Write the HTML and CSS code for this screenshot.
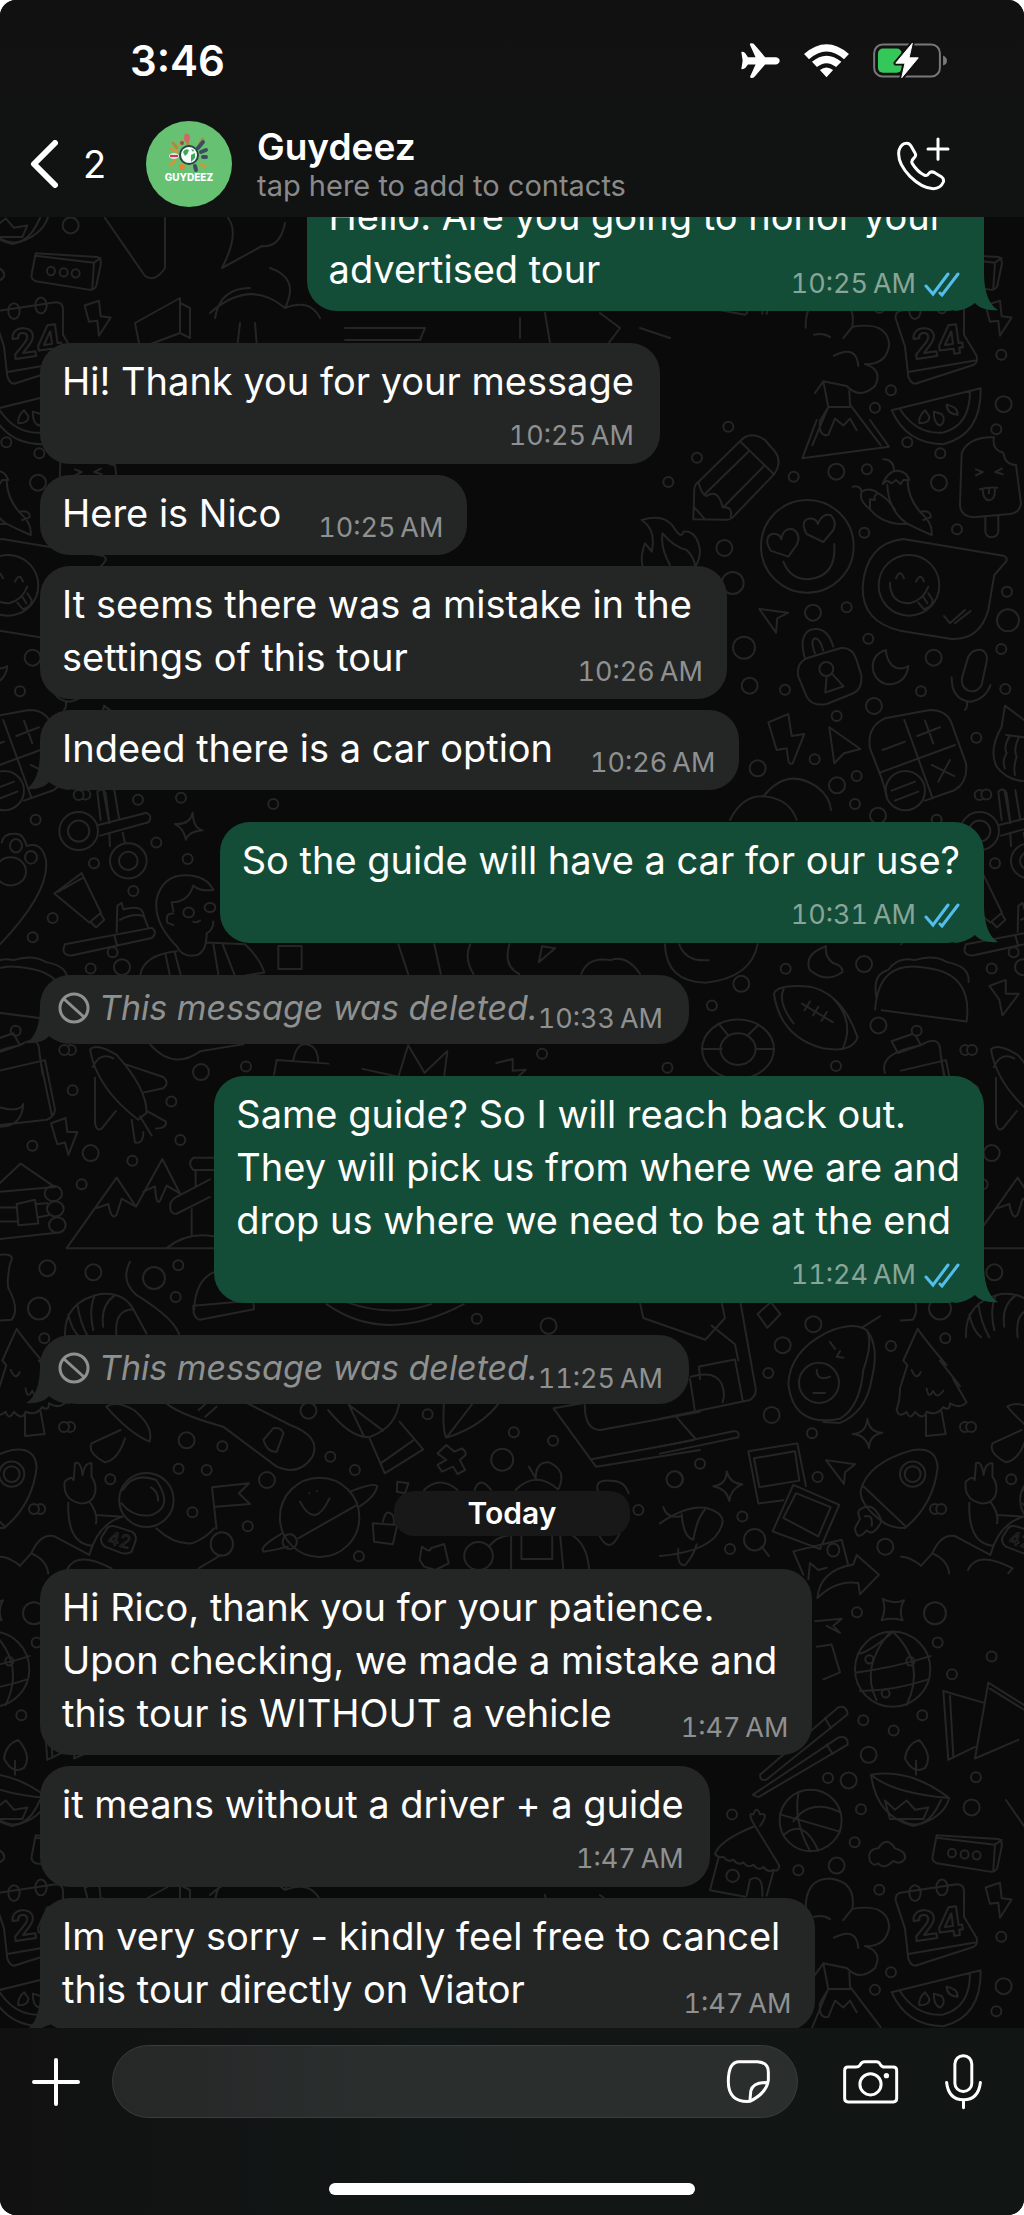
FILE: index.html
```
<!DOCTYPE html>
<html lang="en">
<head>
  <meta charset="UTF-8">
  <meta name="viewport" content="width=device-width, initial-scale=1">
  <title>Guydeez</title>
  <link rel="stylesheet" href="styles.css">
</head>
<body>

<div class="screen">

  <header class="top">
    <div class="status">
      <span class="clock">3:46</span>
      <div class="status-icons">
        <svg class="plane" viewBox="120 68 124 112" aria-hidden="true"><path d="M124 98Q131 97 136 102L144 114H167L150 76Q149 72 154 72Q161 72 164 76L196 114H229Q240 116 240 124.500Q240 133 229 136H196L164 173Q160 178 154 177Q149 176 151 172L167 136H144L136 147Q131 151 124 150L128 125Z" fill="#fff"/></svg>
        <svg class="wifi" viewBox="309 66 142 106" aria-hidden="true"><path d="M312 99Q380 40 448 99L433 115Q380 68 327 115ZM336 123Q380 86 425 123L409 139Q380 115 351 139ZM360 148Q380 132 400 148L380 170Z" fill="#fff"/></svg>
        <svg class="battery" viewBox="513 64 228 112" aria-hidden="true">
          <rect x="518.500" y="71.500" width="199" height="97" rx="26" fill="none" stroke="#78787a" stroke-width="6"/>
          <path d="M727 105Q739 110 739 121T727 135Z" fill="#78787a"/>
          <rect x="530" y="84" width="72" height="73" rx="15" fill="#34c759"/>
          <path d="M634 68L584 128H612L602 172L652 112H624Z" fill="#fff" stroke="#111" stroke-width="14" stroke-linejoin="round"/>
          <path d="M634 68L584 128H612L602 172L652 112H624Z" fill="#fff" stroke="#fff" stroke-width="3" stroke-linejoin="round"/>
        </svg>
      </div>
    </div>

    <div class="nav">
      <button class="back" type="button" aria-label="Back, 2 unread">
        <svg viewBox="0 0 28 48" aria-hidden="true"><path d="M25 3L4 24L25 45" fill="none" stroke="#fff" stroke-width="6" stroke-linecap="round" stroke-linejoin="round"/></svg>
        <span>2</span>
      </button>
      <svg class="avatar" viewBox="0 0 86 86" aria-hidden="true">
        <circle cx="43" cy="43" r="43" fill="#66c172"/>
        <g stroke-width="3" stroke-linecap="round" fill="none">
          <path d="M42 24L40 14M31 27L27 22M54 22L57 18" stroke="#b08a3c"/>
          <path d="M52 27L57 21M55 31L60 29M57 36H60M49 45L50 49" stroke="#3f4c60" stroke-width="4"/>
          <path d="M31 31L25 28M29 40L24 44M55 43L59 46M33 24L36 20" stroke="#c99a3a"/>
        </g>
        <ellipse cx="41" cy="17" rx="3" ry="4" fill="#d8646a"/>
        <ellipse cx="28" cy="35" rx="5" ry="3" fill="#f2dfe2"/>
        <path d="M24 35H32" stroke="#c43d55" stroke-width="2"/>
        <circle cx="36" cy="46" r="3" fill="#e0872f"/>
        <circle cx="36" cy="22" r="2" fill="#705a6c"/>
        <circle cx="43" cy="34" r="10" fill="#2e4240"/>
        <circle cx="43" cy="34" r="8" fill="#f4fff7"/>
        <path d="M37 31Q39 27 43 29Q42 33 39 35ZM45 34L49 32V37L45 41ZM45 28L48 29L47 31Z" fill="#3aa85c"/>
        <text x="43" y="60" text-anchor="middle" class="avatar-name">GUYDEEZ</text>
      </svg>
      <div class="contact">
        <h1 class="contact-name">Guydeez</h1>
        <p class="contact-hint">tap here to add to contacts</p>
      </div>
      <button class="call" type="button" aria-label="Call">
        <svg viewBox="588 348 162 162" aria-hidden="true"><g fill="none" stroke="#fff" stroke-width="9" stroke-linecap="round" stroke-linejoin="round"><path d="M597 388Q604 367 620 367Q628 367 633 375L645 396Q650 404 642 411Q632 420 637 428Q652 452 672 462Q682 466 686 458Q693 449 704 455L724 467Q733 474 730 483Q722 502 700 503Q666 502 630 466Q590 425 597 388Z"/><path d="M714 354V415M684 384H744"/></g></svg>
      </button>
    </div>
  </header>

  <main class="chat">

    <!-- doodle wallpaper, one tile repeated on both axes -->
    <svg class="wallpaper" aria-hidden="true">
      <defs>
        <g id="tile">
          <g transform="translate(640 420) scale(.3333)">
            <path d="M160 298L163 205Q168 188 175 186L300 64Q330 30 375 60L405 95Q428 125 402 163L285 285Q275 298 262 299ZM300 64L402 163M325 95L195 222M370 140L250 262M175 186Q185 225 200 228Q235 205 248 262Q280 260 272 290M163 262L195 298"/>
            <circle cx="502" cy="379" r="139"/>
            <path d="M445 410L392 392Q370 355 395 342Q418 338 424 358Q430 322 460 328Q485 345 470 375ZM550 366L500 342Q480 305 505 296Q528 292 534 312Q545 280 572 285Q592 305 580 330ZM430 425Q450 478 505 478Q590 470 583 372"/>
            <path d="M730 118Q760 118 762 150M728 192Q745 150 775 152Q800 155 808 180L790 180L782 192L768 180L755 190L742 182ZM742 195Q745 270 800 310Q840 330 875 345Q880 310 840 275Q805 235 803 185M638 200Q660 195 665 215M690 268Q655 240 665 215Q690 200 715 220Q700 225 705 240L690 238ZM690 268Q730 315 800 312M715 220Q745 235 765 270M840 275Q875 270 872 292L850 300"/>
            <path d="M965 100Q985 50 1062 52Q1055 90 1090 98Q1095 135 1128 135L1143 250Q1140 278 1110 282L1000 292Q962 290 960 255ZM1036 290V335Q1040 352 1056 352Q1073 350 1075 335V288M1008 148L1028 156L1008 166M1086 146L1066 156L1088 163M1020 208Q1045 200 1072 203M1028 208Q1030 240 1047 241Q1066 240 1065 205M1047 206V220"/>
            <path d="M790 357L1090 407Q1105 412 1098 425L1063 465L1045 570Q1020 660 935 657L780 632Q665 605 668 500Q678 370 790 357ZM750 488Q750 550 810 550Q850 540 865 500M835 548L852 568Q880 560 878 540L865 520M850 530L862 550M768 475Q780 445 792 475M828 485Q842 455 852 485M912 588L930 610L975 570M945 610L992 573"/>
            <circle cx="807" cy="496" r="91"/>
            <path d="M358 567L445 578L412 595L408 638ZM568 922L661 987L612 1000L583 1030ZM385 907L445 882L455 948L493 942L458 1030Q448 1035 445 1022L440 985L410 990Z"/>
            <path d="M500 715L600 685Q635 680 648 715L664 765Q668 810 635 822L560 852Q515 860 500 830L475 770Q468 730 500 715ZM495 715Q475 650 510 630Q560 615 580 680M525 700Q510 660 525 655Q540 655 550 692M560 767L556 818L611 799L575 760"/>
            <circle cx="559" cy="747" r="21"/>
            <path d="M738 690Q690 705 700 755Q715 795 755 793Q800 785 805 738Q780 755 755 735Q738 715 738 690ZM985 710Q1000 685 1025 690Q1045 700 1040 725L1025 795Q1010 820 985 812Q960 800 967 770ZM935 772Q935 840 990 845Q1035 840 1052 795M980 845Q985 860 975 870"/>
            <path d="M740 1125L725 1075L690 985Q680 920 735 895L870 870Q920 870 935 910L978 1030Q985 1085 945 1110L855 1142M793 900L878 1135M720 1058L945 975M728 990L795 965M832 948L900 922M855 902L880 970M875 1035L942 1068M930 1020L895 1085M755 1112L825 1085M765 1142L835 1115"/>
            <circle cx="796" cy="1112" r="59"/>
            <path d="M530 0L487 115L747 80L690 0M370 1130Q440 1040 530 1100Q570 1130 573 1170M270 1200Q310 1120 380 1130Q450 1140 470 1200M5 300Q70 280 100 320Q125 360 130 335Q170 330 180 390Q180 420 165 440M5 300Q50 330 35 395L15 370Q0 410 8 440M68 340Q60 380 90 435M68 340Q100 380 140 390Q165 415 165 440"/>
            <path d="M1085 920Q1045 990 1070 1040Q1100 1080 1150 1083M1152 900L1095 857L1085 920M1098 945L1152 952M1108 950Q1090 980 1100 1000Q1085 1020 1095 1045M1135 955Q1120 990 1130 1010Q1120 1040 1125 1065M1110 1200L1100 1120Q1090 1100 1075 1115L1085 1200"/>
            <g class="ring-s"><path id="a1" d="M265 20h0M171 113h0M85 186h0M461 170h0M681 148h0M802 67h0M901 100h0M673 338h0M951 328h0M620 562h0M1101 515h0M685 656h0M1084 687h0M435 809h0M843 814h0M1096 807h0M590 888h0M524 1018h0M650 1068h0M645 1152h0M1009 953h0M1019 1125h0"/><use href="#a1" class="hole"/></g>
            <g class="ring-m"><path id="a2" d="M589 155h0M897 188h0M253 384h0M519 578h0M881 713h0M329 797h0M702 858h0M353 1045h0M591 1096h0M714 1187h0"/><use href="#a2" class="hole"/></g>
            <g class="ring-l"><path id="a3" d="M278 489h0M312 683h0M1104 601h0"/><use href="#a3" class="hole"/></g>
          </g>

          <g transform="translate(0 790) scale(.3333 .3508)">
            <ellipse cx="236" cy="117" rx="58" ry="54"/><ellipse cx="236" cy="117" rx="32" ry="30"/>
            <ellipse cx="385" cy="202" rx="55" ry="50"/><ellipse cx="385" cy="202" rx="28" ry="26"/>
            <path d="M295 100L440 65Q460 75 445 92L300 130M310 0L328 95M343 0L357 80M328 125L330 160M368 122L375 152M525 97Q570 100 578 65Q580 110 608 115Q565 118 558 142Q552 110 525 97Z"/>
            <path d="M0 440Q150 290 138 200Q125 145 80 160Q70 120 40 125Q10 125 5 150"/>
            <ellipse cx="48" cy="159" rx="18" ry="19"/><ellipse cx="93" cy="192" rx="18" ry="18"/><ellipse cx="32" cy="232" rx="46" ry="40"/>
            <path d="M163 295L245 237L303 350L268 378ZM175 290L250 250M303 355l10 15l-25 22l-15-15M195 440L455 393Q475 405 455 422L215 472Q180 470 195 440ZM343 415L352 445M350 405L352 330L365 322L370 340Q430 325 432 360L445 393M360 370Q400 350 432 360"/>
            <path d="M530 445Q460 380 470 310Q490 240 560 243Q620 245 640 285Q600 290 580 272Q565 320 515 320L520 345M530 445Q545 475 580 472Q620 470 620 408Q640 400 640 375M520 352Q495 350 502 378L520 385M420 530Q430 470 530 460M620 435L735 440Q780 480 793 520L730 530M497 470L510 530M640 438L655 525M525 465L543 530M668 440L705 530M580 375Q590 380 600 372"/>
            <ellipse cx="566" cy="349" rx="16" ry="14"/><ellipse cx="630" cy="335" rx="16" ry="13"/>
            <path d="M835 445h70v65h-70zM0 800L135 770L165 910Q165 930 140 940L0 955M122 775L155 925M0 905Q60 920 70 895Q65 960 0 960"/>
            <path d="M270 740Q290 720 350 755Q440 850 440 920L415 940Q290 850 270 740ZM370 780L490 818Q510 835 490 850L432 862M285 820L285 950Q290 975 305 965L348 915M278 790Q300 745 340 765M395 940L405 1005Q430 1010 430 975M440 915L498 945Q500 965 468 965M420 930L455 985M153 950L197 935L202 975L232 975L205 1040L195 1005L172 1010Z"/>
            <path d="M540 1150L487 1052L408 1188L350 1105L200 1306H640M290 1192L325 1180Q335 1230 350 1210L365 1165L408 1188M430 1145L465 1130Q470 1200 485 1160L500 1128L540 1150M630 1110L530 1160Q505 1170 512 1200Q520 1210 530 1208L630 1160M575 1195V1270M500 1306Q560 1260 640 1272M640 1048H580Q560 1065 580 1083H640M587 1085V1130"/>
            <path d="M0 1145L165 1132L62 1065L0 1120M0 1280L170 1262M50 1180l55-12l10 68l-60 5zM0 1190H50M0 1230H55M110 1180L142 1178M115 1218L145 1212"/>
            <ellipse cx="160" cy="1150" rx="26" ry="22"/><ellipse cx="166" cy="1194" rx="25" ry="22"/><ellipse cx="172" cy="1240" rx="25" ry="22"/>
            <path d="M195 1560Q190 1460 300 1437Q370 1430 400 1480L440 1550M205 1495Q215 1540 240 1560M232 1465Q240 1520 265 1560M285 1440Q265 1480 280 1540M345 1440Q300 1470 310 1530M400 1480Q340 1480 350 1560M390 1345Q360 1400 410 1440Q530 1510 540 1560M583 1480Q585 1400 640 1375M580 1470L760 1455L762 1480L600 1510Q578 1505 580 1470ZM0 1325Q50 1320 30 1350Q20 1400 25 1420Q60 1480 35 1510L0 1512"/>
            <path d="M450 725Q520 800 600 745L730 725M822 812L830 770L985 780M880 770Q890 720 920 725Q955 730 955 780"/>
            <g class="ring-s"><path id="b1" d="M256 13h0M107 85h0M414 28h0M543 22h0M469 150h0M563 197h0M282 209h0M400 288h0M158 365h0M98 420h0M272 509h0M47 686h0M213 741h0M218 856h0M738 788h0M514 888h0M97 1014h0M541 998h0M397 1057h0M245 1124h0M535 1355h0M527 1445h0M820 40h0"/><use href="#b1" class="hole"/></g>
            <g class="ring-m"><path id="b2" d="M366 505h0M603 804h0M272 1035h0M142 1363h0M280 1375h0"/><use href="#b2" class="hole"/></g>
            <g class="ring-l"><path id="b3" d="M462 1391h0M117 1478h0"/><use href="#b3" class="hole"/></g>
          </g>

          <g transform="translate(0 800) scale(.6531 .3954)">
            <path d="M1265 370Q1230 390 1240 430Q1265 465 1290 435Q1290 418 1275 412Q1262 395 1265 370ZM1185 490Q1190 465 1240 472Q1290 490 1313 600Q1305 640 1260 628Q1195 600 1185 490ZM1228 515L1275 562M1232 532l8-22M1245 545l8-22M1258 558l8-22M1200 478Q1190 510 1215 565M1275 500Q1310 560 1290 630"/>
            <path d="M1340 530Q1345 400 1420 425Q1490 440 1480 560L1350 532M1342 500Q1335 440 1360 430Q1375 395 1400 405Q1430 390 1450 410Q1485 420 1483 460M1515 470L1540 455V490L1560 490L1535 545L1530 505ZM1018 365Q1020 460 1080 462Q1150 450 1160 365M1040 365Q1050 410 1085 405"/>
            <ellipse cx="1130" cy="630" rx="55" ry="75"/><ellipse cx="1130" cy="630" rx="27" ry="40"/>
            <path d="M1115 595L1100 565M1145 595L1162 568M1157 630H1185M1105 630H1075M1365 610l35-20l10 30l-35 20zM1355 690Q1345 640 1410 620Q1440 590 1440 640L1445 695M500 1275Q590 1380 710 1275M530 1270Q600 1310 660 1275M980 1272L985 1310L1080 1365L1110 1310L1105 1272M1160 1300l20-30l15 30l-20 35zM555 680L610 700L625 620L650 690L685 635L680 700M760 665l25-10v30l20-3l-20 30"/>
            <path d="M610 365L625 440M665 365L675 440M720 365Q710 400 725 440M780 365Q770 420 795 440M830 370L850 375L825 410ZM890 440Q900 395 935 405Q960 390 980 440"/>
            <g class="ring-s"><path id="e1" d="M1203 427h0M1090 520h0M1478 632h0M1280 673h0M1022 677h0M830 642h0M1552 385h0M730 1312h0"/><use href="#e1" class="hole"/></g>
            <g class="ring-m"><path id="e2" d="M1135 465h0M1323 415h0M1345 570h0M840 1330h0"/><use href="#e2" class="hole"/></g>
          </g>

          <g transform="translate(660 1300) scale(.3333 .4655)">
            <path d="M92 165Q190 145 192 205L188 220M90 170L105 240M120 170L117 143L225 128L248 215M0 255L270 215Q290 205 287 190L240 0M0 315L220 282Q240 280 235 295L0 330M50 252L105 297M155 55L225 95L235 130"/>
            <path d="M385 180Q390 110 500 70Q580 45 620 65Q640 90 610 150Q600 230 540 255Q400 275 385 180ZM620 65Q660 100 635 170Q620 240 540 264L490 262M605 60L660 35M510 90L525 105M540 110L530 122L550 124M470 150Q470 175 510 165M460 200H495"/>
            <ellipse cx="477" cy="178" rx="60" ry="43"/>
            <path d="M773 62L730 130L742 140L720 190Q720 215 710 235Q715 255 740 240Q750 260 765 240Q790 260 800 240Q830 250 850 230Q870 240 870 222Q900 235 920 220L880 170L900 185L840 130L860 140Q800 90 773 62ZM798 245V292L857 288L845 240M755 150Q770 175 782 155M800 190Q805 215 820 195Q830 215 850 195"/>
            <path d="M438 400L412 308L265 325L295 437L370 430M282 340L405 325L418 388L298 402ZM400 397L538 440L480 535L338 497ZM408 415L512 445L475 508L370 468ZM430 590L400 540L545 515L565 570M445 600L450 565L475 580L500 575"/>
            <ellipse cx="520" cy="537" rx="18" ry="14"/>
            <path d="M472 640Q480 580 580 568L590 548L657 590L600 632L595 608Q530 600 472 640ZM498 344L585 353L555 370L552 395ZM578 288Q620 285 622 255Q628 285 667 285Q628 290 627 318Q618 290 578 288ZM160 400Q200 397 200 368Q210 395 247 396Q212 405 208 432Q200 405 160 400ZM668 642Q700 655 732 645Q715 665 728 688Q695 682 665 688Q680 665 668 642Z"/>
            <path d="M602 410Q620 350 760 322Q830 315 833 360Q820 440 735 490Q690 490 665 475Q600 440 602 410ZM610 400L735 485M600 450Q640 430 665 475Q640 510 620 495Q590 520 585 490L600 470Q590 455 600 450M615 465Q640 460 635 485"/>
            <ellipse cx="758" cy="374" rx="38" ry="27"/><ellipse cx="758" cy="374" rx="24" ry="17"/>
            <path d="M0 480Q80 440 140 447Q200 460 185 485Q160 540 0 550M10 445Q20 470 60 465M65 460Q70 510 100 515Q110 470 135 450M55 535Q50 570 75 570Q100 550 110 525M305 530L327 550"/>
            <ellipse cx="284" cy="515" rx="32" ry="23"/>
            <ellipse cx="698" cy="793" rx="113" ry="81"/>
            <path d="M690 713Q600 790 650 860M698 712Q800 780 740 870M600 760Q640 750 700 712M590 800Q700 790 812 765M600 840Q700 840 805 815"/>
            <ellipse cx="628" cy="772" rx="12" ry="9"/><ellipse cx="751" cy="776" rx="12" ry="9"/><ellipse cx="677" cy="845" rx="12" ry="9"/>
            <path d="M300 1020L535 875Q560 870 563 890L320 1030Q300 1035 300 1020ZM278 1063L535 940Q565 935 563 955L295 1068ZM495 898l18 22M500 955l18 20M465 690L545 685L520 700L540 715L500 700M470 745L515 740L540 800L490 815"/>
            <path d="M970 865L850 840L865 988L945 960M870 850L880 980M1092 870L985 822L945 985L1075 945M990 835L1092 880"/>
            <path d="M633 1020Q750 1005 868 1070Q850 1115 760 1130Q650 1110 633 1020ZM633 1020Q700 1060 868 1070M735 985Q740 955 778 945Q820 980 795 1005Q760 1020 735 985ZM768 990V1020M675 1075L690 1115H790L805 1090L765 1095L740 1075L705 1095Z"/>
            <ellipse cx="452" cy="1118" rx="93" ry="66"/>
            <path d="M360 1105L540 1142M415 1060Q400 1120 450 1183M400 1120Q450 1070 540 1100M370 1150Q430 1110 475 1183M630 1205Q620 1180 655 1178Q680 1150 705 1178Q740 1185 735 1200Q720 1215 700 1205Q670 1225 655 1210Q640 1218 630 1205Z"/>
            <path d="M830 1150L1015 1158Q1028 1160 1025 1175L1012 1220Q1005 1230 990 1228L830 1210Q815 1205 818 1195ZM830 1155L1005 1170L1000 1225M1005 1170L1025 1160"/>
            <ellipse cx="876" cy="1188" rx="12" ry="9"/><ellipse cx="914" cy="1191" rx="12" ry="9"/><ellipse cx="950" cy="1193" rx="12" ry="9"/>
            <path d="M165 1190Q180 1160 285 1130L358 1215Q355 1230 340 1224Q325 1232 310 1218Q295 1228 280 1213Q265 1222 250 1208Q235 1216 220 1202Q205 1210 190 1196Q175 1200 165 1190ZM175 1200L150 1268L255 1282M340 1228L320 1280M260 1280L270 1245Q310 1230 307 1280M285 1130Q260 1100 280 1105Q290 1085 300 1105Q330 1100 300 1130"/>
            <ellipse cx="218" cy="1237" rx="19" ry="13"/>
            <path d="M437 1310Q435 1243 510 1243Q590 1250 577 1308Q680 1295 688 1345Q680 1390 615 1388Q670 1400 645 1435Q600 1465 560 1435L490 1425L465 1450M577 1308L550 1332M522 1370Q590 1345 595 1392M462 1325Q490 1320 510 1330M490 1425L505 1480L457 1562M568 1445L570 1475L662 1562M505 1480H570M505 1480L480 1510Q475 1545 505 1540L525 1505L550 1520L570 1505L590 1530"/>
            <path d="M707 1290Q705 1275 725 1273L890 1255Q912 1255 912 1270V1325L950 1370Q955 1385 940 1390L775 1428Q755 1435 745 1415L735 1350ZM745 1405L945 1380M977 1262L1020 1252L1025 1285L1055 1288L1020 1327L1015 1295L990 1297Z"/>
            <ellipse cx="765" cy="1274" rx="17" ry="17"/><ellipse cx="846" cy="1262" rx="17" ry="17"/>
            <path d="M695 1487L962 1440Q965 1540 850 1560Q740 1560 695 1487ZM720 1485Q770 1540 850 1535Q930 1520 930 1447M795 1487Q775 1500 778 1515Q810 1515 808 1500ZM822 1490Q820 1515 840 1520Q860 1510 845 1495ZM860 1475Q860 1495 893 1497Q895 1480 860 1475Z"/>
            <g class="ring-s"><path id="c1" d="M325 157h0M693 99h0M856 82h0M456 286h0M915 273h0M120 352h0M473 380h0M247 465h0M825 449h0M210 535h0M591 671h0M833 736h0M995 766h0M876 804h0M787 892h0M610 903h0M701 925h0M948 1025h0M504 1027h0M603 1094h0M216 1105h0M584 1165h0M415 1225h0M658 1267h0M1024 1368h0M693 1444h0M645 1482h0M1009 1528h0"/><use href="#c1" class="hole"/></g>
            <g class="ring-m"><path id="c2" d="M460 52h0M368 97h0M335 247h0M45 385h0M676 530h0M626 977h0M566 1032h0M935 1090h0M530 1215h0M1031 1474h0"/><use href="#c2" class="hole"/></g>
            <g class="ring-l"><path id="c3" d="M825 673h0"/><use href="#c3" class="hole"/></g>
          </g>
          <text x="912" y="1938" class="doodle-24" transform="rotate(-8 937 1924)">24</text>

          <g transform="translate(0 1400) scale(.4464 .3333)">
            <path d="M238 20Q260 0 300 30Q345 80 335 125Q290 100 238 20ZM270 90L205 130Q195 160 235 187Q265 180 280 115M365 0Q390 40 500 80L620 200Q670 230 700 170Q720 110 650 75L540 0M590 120L612 85Q630 80 635 100L620 155Q600 160 590 120M445 30L470 0M485 20L460 50Z"/>
            <path d="M735 30Q790 120 830 110Q890 80 895 0M780 10L815 108M782 15L858 92M828 115L862 220L948 148L895 65M855 188L925 122M995 0Q990 90 1000 113Q1080 80 1120 5M1000 113L1065 0M1000 135L1018 155L1035 145Q1045 155 1043 165L1030 180L1042 210L1025 222L1015 200L990 215L980 195L1000 180L980 160Z"/>
            <path d="M1305 10L1240 25L1335 200L1568 150M1325 178L1555 120M1310 15Q1310 90 1345 90L1568 35"/>
            <path d="M180 310Q140 300 145 245Q160 225 165 240L168 190Q180 180 185 225Q190 185 205 190L205 230Q220 260 210 290Q200 312 180 310ZM153 308Q150 430 205 437M200 305Q220 340 215 370M215 345L275 350M275 270Q300 215 350 240Q390 320 340 345Q300 355 272 310M338 262Q355 275 354 302M240 385Q245 375 260 380L295 395Q308 405 303 425L295 455Q285 465 270 458L235 440Q222 425 228 410ZM45 497L70 460Q90 400 120 408L200 465Q220 370 275 350M350 385Q390 435 430 430Q460 415 480 385M485 385L475 262L558 250L535 280L560 312L482 320M495 465L445 505"/>
            <ellipse cx="328" cy="300" rx="61" ry="81"/><ellipse cx="497" cy="432" rx="25" ry="35"/>
            <path d="M70 460Q105 480 108 520M150 510Q170 450 250 505L240 520M0 470Q20 470 45 497"/>
            <ellipse cx="716" cy="352" rx="89" ry="119"/>
            <path d="M785 275Q840 245 845 260Q840 290 805 320M632 400Q580 440 590 455Q620 450 645 440M800 315L668 415M672 305Q705 390 738 295M693 280h0M710 274h0"/>
            <ellipse cx="649" cy="425" rx="16" ry="22"/>
            <path d="M835 370L838 425L880 433L890 375ZM858 365Q862 335 872 338Q885 345 882 370M945 440Q965 460 965 445L995 432L1005 490L975 510L950 500L940 480ZM890 245l25 5l-8 30l-18-5z"/>
            <ellipse cx="1072" cy="468" rx="32" ry="42"/>
            <path d="M1095 440Q1115 405 1150 405H1280Q1315 430 1320 510M1145 410V510M1168 405V477H1237V405M1255 408L1262 510M1185 200L1200 235Q1200 185 1230 187Q1270 210 1252 265M1155 270Q1200 210 1250 268M950 270Q985 225 1025 270M1063 270Q1075 225 1100 270M1340 275Q1330 240 1365 242Q1400 240 1408 280M1340 400Q1365 470 1388 400"/>
            <g class="ring-s"><path id="d1" d="M157 81h0M498 139h0M740 170h0M795 210h0M463 210h0M400 206h0M247 238h0M90 327h0M431 337h0M555 379h0M958 43h0M1151 97h0M1239 122h0M804 469h0M1430 330h0"/><use href="#d1" class="hole"/></g>
            <g class="ring-m"><path id="d2" d="M418 121h0M598 240h0M691 32h0M1511 238h0"/><use href="#d2" class="hole"/></g>
            <g class="ring-l"><path id="d3" d="M1125 179h0"/><use href="#d3" class="hole"/></g>
          </g>
          <text x="108" y="1546" class="doodle-42" transform="rotate(14 118 1540)">42</text>

          <!-- palm, camera and notes that end up just above the first reply -->
          <path d="M210 1895Q250 1860 285 1890Q300 1860 270 1850M285 1890Q310 1880 320 1900M215 1900Q220 1870 250 1870M240 1905L230 1990M255 1905L262 1990M135 1905L180 1880V1915L140 1930ZM180 1885l10 5v30l-10-5M520 1900V1920M545 1895L550 1925M600 1895l20 15l-15 20M640 1910l30 10M345 1910h80l-5 12h-75M228 1800Q240 1815 222 1850L262 1828Q280 1830 285 1805M105 1800L145 1858Q155 1865 165 1850V1800M0 1820Q25 1835 40 1800"/>
        </g>
      </defs>
      <use href="#tile" y="-217"/>
      <use href="#tile" x="901" y="-217"/>
      <use href="#tile" x="-901" y="-217"/>
      <use href="#tile" y="-1799"/>
      <use href="#tile" x="-901" y="-1799"/>
    </svg>

    <div class="messages">
      <div class="bubble sent overlap tail">
        <p>Hello. Are you going to honor your<br>advertised tour</p>
        <span class="meta"><time>10:25&#8239;AM</time><svg class="ticks" viewBox="0 0 36 26" aria-hidden="true"><path d="M2 15L9 23L24 3M16 22L18 24L34 3"/></svg></span>
      </div>

      <div class="bubble received new-group stacked">
        <p>Hi! Thank you for your message</p>
        <span class="meta"><time>10:25&#8239;AM</time></span>
      </div>
      <div class="bubble received inline">
        <p>Here is Nico</p>
        <span class="meta"><time>10:25&#8239;AM</time></span>
      </div>
      <div class="bubble received overlap">
        <p>It seems there was a mistake in the<br>settings of this tour</p>
        <span class="meta"><time>10:26&#8239;AM</time></span>
      </div>
      <div class="bubble received inline tail">
        <p>Indeed there is a car option</p>
        <span class="meta"><time>10:26&#8239;AM</time></span>
      </div>

      <div class="bubble sent new-group stacked tail">
        <p>So the guide will have a car for our use?</p>
        <span class="meta"><time>10:31&#8239;AM</time><svg class="ticks" viewBox="0 0 36 26" aria-hidden="true"><path d="M2 15L9 23L24 3M16 22L18 24L34 3"/></svg></span>
      </div>

      <div class="bubble received new-group deleted tail">
        <svg class="banned" viewBox="0 0 32 32" aria-hidden="true"><circle cx="16" cy="16" r="14"/><path d="M6 7L26 25"/></svg>
        <p>This message was deleted.</p>
        <span class="meta"><time>10:33&#8239;AM</time></span>
      </div>

      <div class="bubble sent new-group stacked tail">
        <p>Same guide? So I will reach back out.<br>They will pick us from where we are and<br>drop us where we need to be at the end</p>
        <span class="meta"><time>11:24&#8239;AM</time><svg class="ticks" viewBox="0 0 36 26" aria-hidden="true"><path d="M2 15L9 23L24 3M16 22L18 24L34 3"/></svg></span>
      </div>

      <div class="bubble received new-group deleted tail">
        <svg class="banned" viewBox="0 0 32 32" aria-hidden="true"><circle cx="16" cy="16" r="14"/><path d="M6 7L26 25"/></svg>
        <p>This message was deleted.</p>
        <span class="meta"><time>11:25&#8239;AM</time></span>
      </div>

      <div class="day">Today</div>

      <div class="bubble received overlap">
        <p>Hi Rico, thank you for your patience.<br>Upon checking, we made a mistake and<br>this tour is WITHOUT a vehicle</p>
        <span class="meta"><time>1:47&#8239;AM</time></span>
      </div>
      <div class="bubble received stacked">
        <p>it means without a driver + a guide</p>
        <span class="meta"><time>1:47&#8239;AM</time></span>
      </div>
      <div class="bubble received overlap tail">
        <p>Im very sorry - kindly feel free to cancel<br>this tour directly on Viator</p>
        <span class="meta"><time>1:47&#8239;AM</time></span>
      </div>
    </div>
  </main>

  <footer class="composer">
    <form class="composer-row">
      <button class="plus" type="button" aria-label="Attach">
        <svg viewBox="0 0 48 48" aria-hidden="true"><path d="M24 2V46M2 24H46" stroke="#fff" stroke-width="4" stroke-linecap="round"/></svg>
      </button>
      <div class="field">
        <input type="text" aria-label="Message">
        <button class="sticker" type="button" aria-label="Stickers">
          <svg viewBox="140 86 136 136" aria-hidden="true"><path d="M147 154Q147 94 180 94H235Q268 96 268 125V150Q262 190 212 214Q147 218 147 154ZM268 157Q222 155 215 182L212 214" fill="none" stroke="#fff" stroke-width="9" stroke-linejoin="round"/></svg>
        </button>
      </div>
      <button class="camera" type="button" aria-label="Camera">
        <svg viewBox="488 84 172 138" aria-hidden="true"><g fill="none" stroke="#fff" stroke-width="9" stroke-linejoin="round"><path d="M496 118Q496 108 506 108H530Q538 108 543 101Q548 92 556 92H592Q600 92 604 101Q608 108 617 108H642Q653 108 653 118V203Q653 213 643 213H506Q496 213 496 203Z"/><circle cx="574" cy="160" r="32"/></g><circle cx="622" cy="134" r="8" fill="#fff"/></svg>
      </button>
      <button class="mic" type="button" aria-label="Voice message">
        <svg viewBox="792 62 122 172" aria-hidden="true"><g fill="none" stroke="#fff" stroke-width="9" stroke-linecap="round"><rect x="827" y="70" width="51" height="108" rx="25"/><path d="M802 151Q808 203 853 203T904 151M853 203V227"/></g></svg>
      </button>
    </form>
    <div class="home-bar"></div>
  </footer>

</div>

</body>
</html>
```
FILE: styles.css
```
* {
  box-sizing: border-box;
}
body {
  margin: 0;
  background: #fff;
  font-family: Inter, "Liberation Sans", sans-serif;
  color: #fff;
}
h1, p {
  margin: 0;
  font-weight: 400;
}
button {
  padding: 0;
  border: none;
  background: none;
  color: inherit;
  font: inherit;
  cursor: pointer;
}
svg {
  display: block;
}
.screen {
  display: flex;
  flex-direction: column;
  height: 100vh;
  border-radius: 16px;
  overflow: hidden;
  background: #0a0a0a;
}

/* header */
.top {
  background: linear-gradient(#111, #111313);
  padding-bottom: 10px;
}
.status {
  display: flex;
  justify-content: space-between;
  align-items: center;
  height: 121px;
  padding: 0 76px 0 130px;
}
.clock {
  font-size: 42px;
  font-weight: 600;
}
.status-icons {
  display: flex;
  align-items: center;
  gap: 22px;
}
.plane {
  width: 41px;
  height: 37px;
}
.wifi {
  width: 47px;
  height: 35px;
}
.battery {
  width: 76px;
  height: 37px;
}
.nav {
  display: flex;
  align-items: center;
  height: 86px;
  padding: 0 74px 0 30px;
}
.back {
  display: flex;
  align-items: center;
  gap: 25px;
  width: 116px;
  font-size: 38px;
}
.back svg {
  width: 28px;
  height: 48px;
}
.avatar {
  width: 86px;
  height: 86px;
}
.avatar-name {
  font-size: 10px;
  font-weight: 800;
  fill: #fff;
}
.contact {
  flex: 1;
  margin-left: 25px;
}
.contact-name {
  font-size: 37px;
  font-weight: 600;
  line-height: 44px;
}
.contact-hint {
  font-size: 29px;
  line-height: 34px;
  color: #8a8a8a;
}
.call svg {
  width: 54px;
  height: 54px;
}

/* conversation */
.chat {
  position: relative;
  flex: 1;
  min-height: 0;
  display: flex;
  flex-direction: column;
  justify-content: flex-end;
  overflow: hidden;
}
.wallpaper {
  position: absolute;
  inset: 0;
  width: 100%;
  height: 100%;
  fill: none;
  stroke: #252525;
  stroke-width: 2;
  stroke-linecap: round;
  stroke-linejoin: round;
}
.wallpaper * {
  vector-effect: non-scaling-stroke;
}
.ring-s { stroke-width: 12; }
.ring-m { stroke-width: 18; }
.ring-l { stroke-width: 24; }
.hole { stroke: #0a0a0a; }
.ring-s .hole { stroke-width: 8; }
.ring-m .hole { stroke-width: 14; }
.ring-l .hole { stroke-width: 20; }
.doodle-24 {
  font-size: 40px;
  font-weight: 700;
}
.doodle-42 {
  font-size: 18px;
  stroke-width: 1;
}
.messages {
  position: relative;
  display: flex;
  flex-direction: column;
  align-items: flex-start;
  gap: 11px;
  padding: 0 40px;
  margin-bottom: -3px;
}
.bubble {
  --bg: #242626;
  position: relative;
  isolation: isolate;
  display: grid;
  padding: 12px 24px 15px 22px;
  border-radius: 30px;
  background: var(--bg);
  font-size: 38px;
  line-height: 53px;
  white-space: nowrap;
}
.received.stacked {
  padding-right: 26px;
}
.sent {
  --bg: #144d37;
  align-self: flex-end;
}
.new-group {
  margin-top: 21px;
}
.meta {
  display: flex;
  align-items: center;
  justify-content: flex-end;
  gap: 8px;
  font-size: 27px;
  font-variant-numeric: tabular-nums;
  line-height: 40px;
  color: #8f9191;
}
.sent .meta {
  color: #88a598;
}
.ticks {
  width: 36px;
  height: 26px;
  fill: none;
  stroke: #53bdeb;
  stroke-width: 3;
  stroke-linecap: round;
}
/* time on the last line of the text */
.overlap {
  padding-right: 35px;
}
.overlap p,
.overlap .meta {
  grid-area: 1 / 1;
}
.overlap .meta {
  align-self: end;
  margin-right: -11px;
  margin-bottom: -8px;
}
.sent.overlap {
  padding-right: 40px;
}
.sent.overlap .meta {
  margin-right: -16px;
}
/* time beside the text */
.inline {
  grid-template-columns: auto auto;
  gap: 37px;
}
.inline .meta {
  align-self: end;
  margin-bottom: -8px;
}
.stacked .meta {
  margin-top: -6px;
  margin-bottom: -7px;
  padding-top: 14px;
}
.deleted {
  grid-template-columns: 32px auto auto;
  align-items: center;
  padding: 6px 26px 10px 18px;
  color: #8f9191;
}
.deleted p {
  margin-left: 9px;
  font-style: italic;
  font-size: 34px;
}
.deleted .meta {
  align-self: end;
  margin-bottom: -5px;
}
.banned {
  width: 32px;
  height: 32px;
  fill: none;
  stroke: #8f9191;
  stroke-width: 3;
}
.tail::after {
  content: "";
  position: absolute;
  z-index: -1;
  left: -14px;
  bottom: 0;
  width: 44px;
  height: 38px;
  background: var(--bg);
  clip-path: path("M14 0C14 19 9 32 0 37C10 38 19 35 23 30C28 34 36 38 44 38V0Z");
}
.sent.tail::after {
  left: auto;
  right: -14px;
  transform: scaleX(-1);
}
.tail {
  border-bottom-left-radius: 36px;
}
.sent.tail {
  border-bottom-left-radius: 30px;
  border-bottom-right-radius: 36px;
}
.day {
  align-self: center;
  width: 236px;
  margin: 76px 0 22px;
  border-radius: 20px;
  background: #181818;
  font-size: 30px;
  font-weight: 600;
  line-height: 45px;
  text-align: center;
}

/* message box */
.composer {
  padding: 17px 0 20px;
  background: linear-gradient(90deg, #111, #111716 40%, #111615);
}
.composer-row {
  display: flex;
  align-items: center;
  margin-bottom: 65px;
  padding: 0 40px 0 28px;
}
.plus svg {
  width: 56px;
  height: 48px;
}
.field {
  flex: 1;
  min-width: 0;
  display: flex;
  align-items: center;
  height: 73px;
  margin-left: 28px;
  padding: 0 26px 0 28px;
  border: 1px solid #3a3d3c;
  border-radius: 37px;
  background: linear-gradient(90deg, #262727, #2a2f2e 40%);
}
.field input {
  flex: 1;
  min-width: 0;
  border: none;
  outline: none;
  background: none;
  color: #fff;
  font: inherit;
  font-size: 38px;
}
.sticker svg {
  width: 45px;
  height: 45px;
}
.camera {
  margin: 0 44px;
}
.camera svg {
  width: 57px;
  height: 46px;
}
.mic svg {
  width: 41px;
  height: 57px;
}
.home-bar {
  width: 366px;
  height: 12px;
  margin: 0 auto;
  border-radius: 6px;
  background: #fff;
}
```
